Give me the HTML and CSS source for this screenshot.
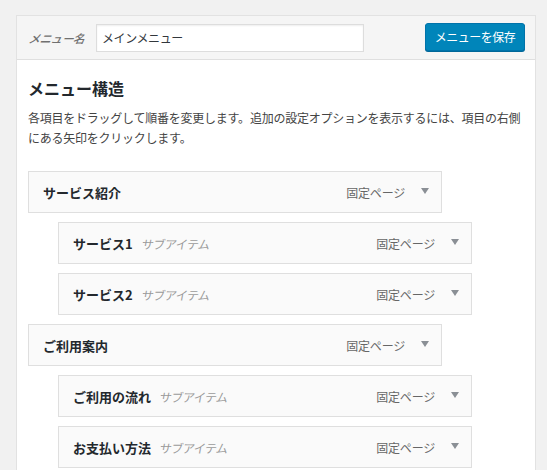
FILE: index.html
```html
<!DOCTYPE html>
<html lang="ja">
<head>
<meta charset="utf-8">
<link rel="stylesheet" href="styles.css">
</head>
<body>
<div class="panel">
  <div class="panel-header">
    <label class="name-label">メニュー名</label>
    <div class="name-input">メインメニュー</div>
    <button class="save-btn">メニューを保存</button>
  </div>
  <div class="panel-body">
    <h3 class="title">メニュー構造</h3>
    <p class="desc">各項目をドラッグして順番を変更します。追加の設定オプションを表示するには、項目の右側にある矢印をクリックします。</p>
    <ul class="menu">
      <li class="item">
        <span class="item-title">サービス紹介</span>
        <span class="item-type">固定ページ</span><span class="arrow"></span>
      </li>
      <li class="item sub">
        <span class="item-title">サービス1</span><span class="sub-label">サブアイテム</span>
        <span class="item-type">固定ページ</span><span class="arrow"></span>
      </li>
      <li class="item sub">
        <span class="item-title">サービス2</span><span class="sub-label">サブアイテム</span>
        <span class="item-type">固定ページ</span><span class="arrow"></span>
      </li>
      <li class="item">
        <span class="item-title">ご利用案内</span>
        <span class="item-type">固定ページ</span><span class="arrow"></span>
      </li>
      <li class="item sub">
        <span class="item-title">ご利用の流れ</span><span class="sub-label">サブアイテム</span>
        <span class="item-type">固定ページ</span><span class="arrow"></span>
      </li>
      <li class="item sub">
        <span class="item-title">お支払い方法</span><span class="sub-label">サブアイテム</span>
        <span class="item-type">固定ページ</span><span class="arrow"></span>
      </li>
    </ul>
  </div>
</div>
</body>
</html>
```
FILE: styles.css
```css
* { box-sizing: border-box; }
html, body { margin: 0; height: 100%; overflow: hidden; }
body {
  background: #f1f1f1;
  font-family: "Noto Sans CJK JP", "Noto Sans", sans-serif;
  color: #444;
  padding: 15px 11px 0 16px;
}
.panel {
  width: 520px;
  background: #fff;
  border: 1px solid #e2e2e2;
  border-bottom: none;
  height: 600px;
}
.panel-header {
  display: flex;
  align-items: center;
  height: 44px;
  background: #f5f5f5;
  border-bottom: 1px solid #dfdfdf;
  padding: 0 10px 0 12px;
}
.name-label {
  font-style: italic;
  font-size: 11.5px;
  letter-spacing: -0.4px;
  font-weight: 500;
  color: #707070;
  width: 67px;
  flex: none;
  transform: skewX(-10deg);
}
.name-input {
  width: 268px;
  height: 28px;
  border: 1px solid #ddd;
  background: #fff;
  box-shadow: inset 0 1px 2px rgba(0,0,0,0.07);
  font-size: 12px;
  letter-spacing: -0.4px;
  color: #32373c;
  line-height: 26px;
  padding-left: 5px;
}
.save-btn {
  margin-left: auto;
  width: 100px;
  height: 28px;
  background: #0085ba;
  border: 1px solid #0073aa;
  border-radius: 3px;
  box-shadow: 0 1px 0 #006799;
  color: #fff;
  font-family: inherit;
  font-size: 12px;
  letter-spacing: -0.5px;
  padding: 0;
  line-height: 26px;
  margin-top: -1px;
}
.panel-body { padding: 0 10px 0 11px; }
.title {
  margin: 17px 0 0;
  font-size: 16px;
  font-weight: 600;
  line-height: 22px;
  color: #23282d;
}
.desc {
  margin: 9px 0 0;
  font-size: 12px;
  letter-spacing: -0.24px;
  line-height: 20px;
  color: #444;
}
.menu {
  list-style: none;
  margin: 23px 0 0;
  padding: 0;
}
.item {
  display: flex;
  align-items: center;
  width: 414px;
  height: 42px;
  margin-bottom: 9px;
  background: #fafafa;
  border: 1px solid #dfdfdf;
  padding: 0 12px 0 14px;
}
.item.sub { margin-left: 30px; }
.item-title {
  font-size: 13px;
  font-weight: 700;
  color: #23282d;
}
.sub-label {
  margin-left: 9px;
  font-size: 12px;
  letter-spacing: -0.5px;
  color: #9a9a9a;
  transform: skewX(-10deg);
}
.item-type {
  margin-left: auto;
  font-size: 12px;
  letter-spacing: -0.2px;
  color: #666;
}
.arrow {
  margin-left: 16px;
  width: 0;
  height: 0;
  border-left: 4px solid transparent;
  border-right: 4px solid transparent;
  border-top: 6px solid #8a8f95;
  margin-top: -2px;
}
```
